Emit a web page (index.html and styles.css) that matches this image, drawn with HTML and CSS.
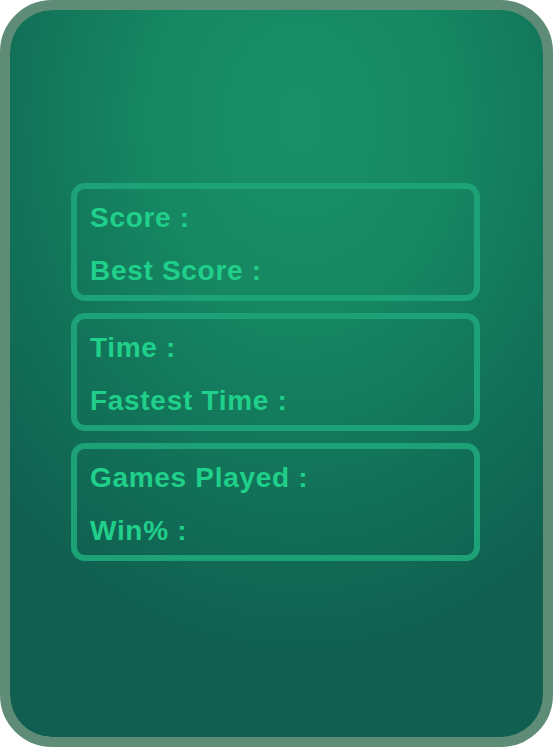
FILE: index.html
```html
<!DOCTYPE html>
<html>
<head>
<meta charset="utf-8">
<link rel="stylesheet" href="styles.css">
</head>
<body>
<div class="frame">
  <div class="felt">
    <div class="stats">
      <div class="box">
        <div class="line">Score :</div>
        <div class="line">Best Score :</div>
      </div>
      <div class="box">
        <div class="line">Time :</div>
        <div class="line">Fastest Time :</div>
      </div>
      <div class="box">
        <div class="line">Games Played :</div>
        <div class="line">Win% :</div>
      </div>
    </div>
  </div>
</div>
</body>
</html>
```
FILE: styles.css
```css
html, body {
  margin: 0;
  padding: 0;
  background: #ffffff;
}
.frame {
  width: 553px;
  height: 747px;
  box-sizing: border-box;
  border: 10px solid #5e8c76;
  border-radius: 52px;
  overflow: hidden;
  background: #5e8c76;
}
.felt {
  width: 100%;
  height: 100%;
  border-radius: 42px;
  background: radial-gradient(ellipse 420px 540px at 290px 110px, #199068 0%, #168862 35%, #127459 65%, #105f50 100%);
  display: flex;
  align-items: center;
  justify-content: center;
}
.stats {
  display: flex;
  flex-direction: column;
  gap: 12px;
  width: 409px;
  margin-top: -3px;
  margin-left: -2px;
}
.box {
  border: 6px solid #1da176;
  border-radius: 14px;
  height: 118px;
  box-sizing: border-box;
  padding: 2px 0 0 13px;
}
.line {
  height: 53px;
  line-height: 53px;
  font-family: "Liberation Sans", Arial, sans-serif;
  font-weight: bold;
  font-size: 28px;
  letter-spacing: 0.7px;
  color: #20cf8a;
}
```
